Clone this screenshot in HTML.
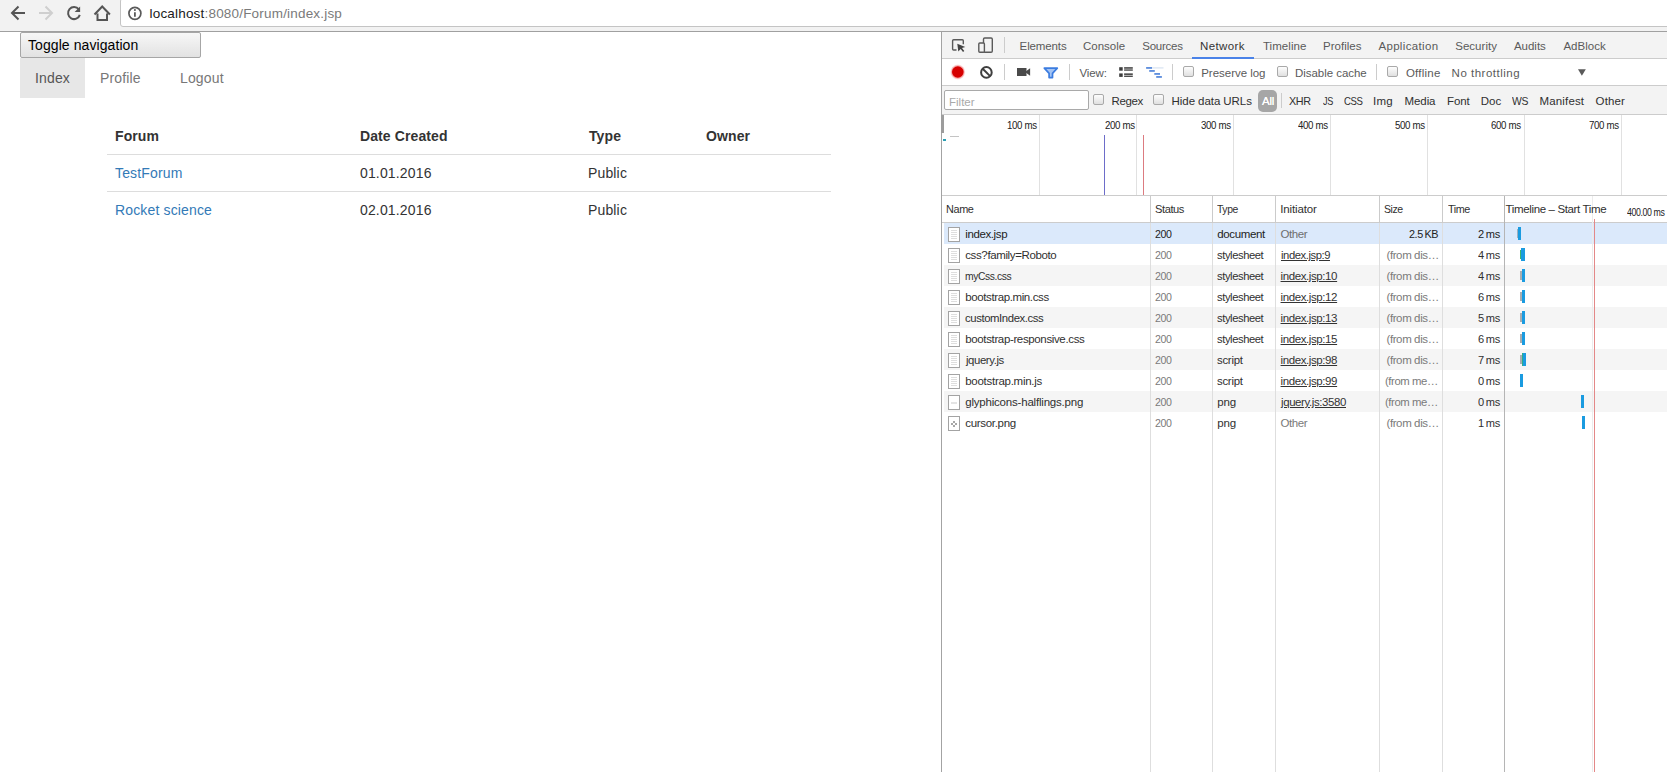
<!DOCTYPE html>
<html>
<head>
<meta charset="utf-8">
<title>Forum</title>
<style>
*{box-sizing:border-box;margin:0;padding:0}
html,body{width:1667px;height:772px;overflow:hidden;background:#fff}
body{position:relative;font-family:"Liberation Sans",sans-serif;color:#333}
.abs{position:absolute}
/* browser chrome */
#chrome{position:absolute;left:0;top:0;width:1667px;height:32px;background:#f2f2f2;border-bottom:1px solid #a0a0a0}
#urlbox{position:absolute;left:120px;top:-2px;width:1560px;height:29px;background:#fff;border:1px solid #c4c4c4;border-radius:3px}
#url{position:absolute;left:149.500px;top:5px;font-size:13.500px;line-height:17px;color:#7a7a7a;white-space:nowrap;letter-spacing:0.190px}
#url b{font-weight:normal;color:#1b1b1b}
/* page */
#togglebtn{position:absolute;left:20px;top:32px;width:181px;height:26px;border:1px solid #a6a6a6;border-radius:2px;background:linear-gradient(#f7f7f7,#e2e2e2);font-size:14px;line-height:24px;color:#000;padding-left:7px;white-space:nowrap;letter-spacing:0.08px}
.nav{position:absolute;top:58px;height:40px;font-size:14px;line-height:40px;color:#777;white-space:nowrap;letter-spacing:0.15px}
#nav1{left:20px;width:65px;background:#e7e7e7;color:#555;text-align:center}
#nav2{left:100px}
#nav3{left:180px}
.th{position:absolute;top:128px;font-size:14px;line-height:17px;font-weight:bold;color:#333;white-space:nowrap;letter-spacing:0.1px}
.td{position:absolute;font-size:14px;line-height:17px;color:#333;white-space:nowrap;letter-spacing:0.15px}
.td.l{color:#337ab7}
.hr{position:absolute;left:107px;width:724px;height:1px;background:#ddd}
/* devtools */
.t{position:absolute;white-space:nowrap;line-height:1;font-family:"Liberation Sans",sans-serif;transform-origin:0 50%}
.bx{position:absolute}
.vsep{position:absolute;width:1px;background:#ccc}
.cb{position:absolute;width:11px;height:11px;border:1px solid #a9a9a9;border-radius:2px;background:linear-gradient(#fdfdfd,#e0e0e0)}
.g{position:absolute;top:115px;width:1px;height:80px;background:#e1e1e1}
.col{position:absolute;top:196px;width:1px;height:576px;background:#dedede}
.row{position:absolute;left:944px;width:723px;height:21px}
.fi{position:absolute;left:948px;width:12px;height:15px;border:1px solid #a3a3a3;background:#fff}
.fi i{position:absolute;left:2px;width:6px;height:1px;background:#dedede}
.bar{position:absolute;height:13px;background:#1a9be0}
</style>
</head>
<body>
<div id="chrome">
  <div id="urlbox"></div>
  <svg class="abs" style="left:0;top:0" width="145" height="31" viewBox="0 0 145 31" fill="none">
    <g stroke="#555" stroke-width="2" stroke-linecap="butt" stroke-linejoin="miter">
      <path d="M25 13H12.5M18.5 6.5L12 13l6.500 6.500"/>
      <path d="M78.800 9.400A6 6 0 1 0 79.800 14.900" />
      <path d="M97.500 13.500V20h9.500v-6.500M94.500 14.500L102.200 6.500l7.700 8"/>
    </g>
    <path d="M80.100 6.400v5.500h-5.500z" fill="#555"/>
    <g stroke="#cfcfcf" stroke-width="2"><path d="M39 13H51.500M45.500 6.500L52 13l-6.500 6.500"/></g>
    <circle cx="134.900" cy="13.300" r="6" stroke="#5a5a5a" stroke-width="1.700"/>
    <path d="M134.900 12.300v4.500" stroke="#5a5a5a" stroke-width="1.800"/>
    <circle cx="134.900" cy="10" r="1.050" fill="#5a5a5a"/>
  </svg>
  <div id="url"><b>localhost</b>:8080/Forum/index.jsp</div>
</div>

<div id="togglebtn">Toggle navigation</div>
<div class="nav" id="nav1">Index</div>
<div class="nav" id="nav2">Profile</div>
<div class="nav" id="nav3">Logout</div>

<div class="th" style="left:115px">Forum</div>
<div class="th" style="left:360px">Date Created</div>
<div class="th" style="left:589px">Type</div>
<div class="th" style="left:706px">Owner</div>
<div class="hr" style="top:154px"></div>
<div class="td l" style="left:115px;top:165px">TestForum</div>
<div class="td" style="left:360px;top:165px">01.01.2016</div>
<div class="td" style="left:588px;top:165px">Public</div>
<div class="hr" style="top:191px"></div>
<div class="td l" style="left:115px;top:202px">Rocket science</div>
<div class="td" style="left:360px;top:202px">02.01.2016</div>
<div class="td" style="left:588px;top:202px">Public</div>

<!-- devtools frame -->
<div class="bx" style="left:941px;top:32px;width:1px;height:740px;background:#a3a3a3"></div>
<div class="bx" style="left:942px;top:32px;width:725px;height:27px;background:#f3f3f3;border-bottom:1px solid #ccc"></div>
<div class="bx" style="left:942px;top:59px;width:725px;height:27px;background:#fff;border-bottom:1px solid #ccc"></div>
<div class="bx" style="left:942px;top:86px;width:725px;height:29px;background:#f3f3f3;border-bottom:1px solid #ccc"></div>
<div class="bx" style="left:942px;top:195px;width:725px;height:1px;background:#ccc"></div>
<div class="bx" style="left:942px;top:222px;width:725px;height:1px;background:#ccc"></div>
<!-- network tab underline -->
<div class="bx" style="left:1192px;top:57px;width:62px;height:2px;background:#4a82e8"></div>
<!-- tab bar icons -->
<svg class="abs" style="left:942px;top:32px" width="70" height="27" viewBox="0 0 70 27" fill="none">
  <path d="M21.300 12.200V8.700a1 1 0 0 0 -1 -1h-8.700a1 1 0 0 0 -1 1v8.300a1 1 0 0 0 1 1H14.500" stroke="#5a5a5a" stroke-width="1.400"/>
  <path d="M15.300 11.700l8 3.200-3.300 1.200 2.300 3-1.300 1-2.300-3-2.400 2.300z" fill="#444"/>
  <rect x="41.500" y="6" width="8.800" height="14.200" rx="1.200" stroke="#5a5a5a" stroke-width="1.400"/>
  <rect x="36.800" y="11" width="5.600" height="9.200" rx="1" fill="#f3f3f3" stroke="#5a5a5a" stroke-width="1.400"/>
</svg>
<div class="vsep" style="left:1004px;top:37px;height:16px"></div>
<!-- toolbar icons -->
<svg class="abs" style="left:942px;top:59px" width="240" height="27" viewBox="0 0 240 27" fill="none">
  <circle cx="15.800" cy="13" r="7.400" fill="#fde3e3"/>
  <circle cx="15.800" cy="13" r="6.700" fill="#f7a8a8"/>
  <circle cx="15.800" cy="13" r="5.800" fill="#d60000"/>
  <circle cx="44.400" cy="13.400" r="5.300" stroke="#3f3f3f" stroke-width="2"/>
  <path d="M40.700 9.700l7.400 7.400" stroke="#3f3f3f" stroke-width="2"/>
  <path d="M75 9h9.500v8H75z" fill="#4a4a4a"/>
  <path d="M83 13l5.100-3.700v7.400z" fill="#4a4a4a"/>
  <path d="M102.300 9.200h13l-4.800 5.200v4.200l-3.400 0v-4.200z" fill="#a4c4f4" stroke="#3b7ce0" stroke-width="1.700" stroke-linejoin="round"/>
  <g fill="#3c3c3c"><rect x="177.200" y="8.200" width="3.500" height="3.500"/><rect x="177.200" y="14.400" width="3.500" height="3.500"/>
  <rect x="182.100" y="8.200" width="8.700" height="1.500"/><rect x="182.100" y="10.400" width="8.700" height="1.300"/>
  <rect x="182.100" y="14.400" width="8.700" height="1.500"/><rect x="182.100" y="16.600" width="8.700" height="1.300"/></g>
  <g fill="#3b76d6"><rect x="204.100" y="8.200" width="5.900" height="1.500"/><rect x="207.200" y="11.200" width="5.600" height="1.500"/><rect x="212.300" y="14.200" width="5.700" height="1.500"/><rect x="214.200" y="17.200" width="5.700" height="1.500"/></g>
  <rect x="210" y="8.200" width="11.500" height="1.400" fill="#dde6f3"/>
</svg>
<div class="vsep" style="left:1004px;top:64px;height:16px"></div>
<div class="vsep" style="left:1069px;top:64px;height:16px"></div>
<div class="vsep" style="left:1172px;top:64px;height:16px"></div>
<div class="vsep" style="left:1376px;top:64px;height:16px"></div>
<div class="cb" style="left:1183px;top:66px"></div>
<div class="cb" style="left:1277px;top:66px"></div>
<div class="cb" style="left:1387px;top:66px"></div>
<svg class="abs" style="left:1577px;top:68px" width="10" height="9" viewBox="0 0 10 9"><path d="M1 1.200h7.800L4.900 7.800z" fill="#5a5a5a"/></svg>
<!-- filter row -->
<div class="bx" style="left:944px;top:90px;width:145px;height:20px;background:#fff;border:1px solid #a9a9a9;border-radius:2px"></div>
<div class="cb" style="left:1093px;top:94px"></div>
<div class="cb" style="left:1153px;top:94px"></div>
<div class="bx" style="left:1258px;top:90px;width:19px;height:22px;background:#a6a6a6;border-radius:5px"></div>
<div class="vsep" style="left:1281px;top:93px;height:15px"></div>
<!-- overview -->
<div class="g" style="left:1039px"></div><div class="g" style="left:1136px"></div><div class="g" style="left:1233px"></div>
<div class="g" style="left:1330px"></div><div class="g" style="left:1427px"></div><div class="g" style="left:1524px"></div><div class="g" style="left:1621px"></div>
<div class="bx" style="left:941px;top:115px;width:3px;height:18px;background:#9c9c9c"></div>
<div class="bx" style="left:943px;top:139px;width:3px;height:2px;background:#2a9fb4"></div>
<div class="bx" style="left:950px;top:136px;width:9px;height:1px;background:#c4c4c4"></div>
<div class="bx" style="left:1104px;top:135px;width:1px;height:60px;background:#6d6dc9"></div>
<div class="bx" style="left:1143px;top:135px;width:1px;height:60px;background:#dc7b80"></div>
<div class="row" style="top:223px;background:#dbe9fb"></div>
<div class="row" style="top:265px;background:#f5f5f5"></div>
<div class="row" style="top:307px;background:#f5f5f5"></div>
<div class="row" style="top:349px;background:#f5f5f5"></div>
<div class="row" style="top:391px;background:#f5f5f5"></div>
<div class="col" style="left:1150px"></div>
<div class="col" style="left:1150px;height:27px;background:#cbcbcb"></div>
<div class="col" style="left:1212px"></div>
<div class="col" style="left:1212px;height:27px;background:#cbcbcb"></div>
<div class="col" style="left:1275px"></div>
<div class="col" style="left:1275px;height:27px;background:#cbcbcb"></div>
<div class="col" style="left:1379px"></div>
<div class="col" style="left:1379px;height:27px;background:#cbcbcb"></div>
<div class="col" style="left:1442px"></div>
<div class="col" style="left:1442px;height:27px;background:#cbcbcb"></div>
<div class="col" style="left:1504px;background:#b5b5b5"></div>
<div class="col" style="left:1592px;background:#ececec"></div>
<div class="bx" style="left:1594px;top:219px;width:1px;height:553px;background:#e38888"></div>
<div class="fi" style="top:227px"><i style="top:2px"></i><i style="top:4px"></i><i style="top:6px"></i><i style="top:8px"></i><i style="top:10px"></i></div>
<div class="fi" style="top:248px"><i style="top:2px"></i><i style="top:4px"></i><i style="top:6px"></i><i style="top:8px"></i><i style="top:10px"></i></div>
<div class="fi" style="top:269px"><i style="top:2px"></i><i style="top:4px"></i><i style="top:6px"></i><i style="top:8px"></i><i style="top:10px"></i></div>
<div class="fi" style="top:290px"><i style="top:2px"></i><i style="top:4px"></i><i style="top:6px"></i><i style="top:8px"></i><i style="top:10px"></i></div>
<div class="fi" style="top:311px"><i style="top:2px"></i><i style="top:4px"></i><i style="top:6px"></i><i style="top:8px"></i><i style="top:10px"></i></div>
<div class="fi" style="top:332px"><i style="top:2px"></i><i style="top:4px"></i><i style="top:6px"></i><i style="top:8px"></i><i style="top:10px"></i></div>
<div class="fi" style="top:353px"><i style="top:2px"></i><i style="top:4px"></i><i style="top:6px"></i><i style="top:8px"></i><i style="top:10px"></i></div>
<div class="fi" style="top:374px"><i style="top:2px"></i><i style="top:4px"></i><i style="top:6px"></i><i style="top:8px"></i><i style="top:10px"></i></div>
<div class="fi" style="top:395px"><i style="top:6px;left:2px;width:6px;height:2px;background:#e4e4e4"></i></div>
<div class="fi" style="top:416px"><i style="top:4px;left:4px;width:2px;height:2px;background:#8a8a8a;border-radius:1px"></i><i style="top:8px;left:4px;width:2px;height:2px;background:#8a8a8a;border-radius:1px"></i><i style="top:6px;left:2px;width:2px;height:2px;background:#8a8a8a;border-radius:1px"></i><i style="top:6px;left:6px;width:2px;height:2px;background:#8a8a8a;border-radius:1px"></i></div>
<div class="bar" style="left:1518px;top:227px;width:3px"></div>
<div class="bar" style="left:1517px;top:229px;width:1px;height:9px;background:#9fb0bd"></div>
<div class="bar" style="left:1521px;top:248px;width:4px"></div>
<div class="bar" style="left:1520px;top:250px;width:1px;height:9px;background:#3fb56f"></div>
<div class="bar" style="left:1522px;top:269px;width:3px"></div>
<div class="bar" style="left:1520px;top:271px;width:2px;height:9px;background:#a9adb0"></div>
<div class="bar" style="left:1522px;top:290px;width:3px"></div>
<div class="bar" style="left:1520px;top:292px;width:2px;height:9px;background:#a9adb0"></div>
<div class="bar" style="left:1522px;top:311px;width:3px"></div>
<div class="bar" style="left:1520px;top:313px;width:2px;height:9px;background:#a9adb0"></div>
<div class="bar" style="left:1522px;top:332px;width:3px"></div>
<div class="bar" style="left:1520px;top:334px;width:2px;height:9px;background:#a9adb0"></div>
<div class="bar" style="left:1523px;top:353px;width:3px"></div>
<div class="bar" style="left:1520px;top:355px;width:2px;height:9px;background:#a9adb0"></div>
<div class="bar" style="left:1522px;top:353px;width:1px;background:#2fae86"></div>
<div class="bar" style="left:1520px;top:374px;width:3px"></div>
<div class="bar" style="left:1581px;top:395px;width:3px"></div>
<div class="bar" style="left:1582px;top:416px;width:3px"></div>
<span class="t" style="left:1019.61px;top:41.3px;font-size:11.5px;color:#5a5a5a;letter-spacing:-0.129px;">Elements</span>
<span class="t" style="left:1083.05px;top:41.3px;font-size:11.5px;color:#5a5a5a;letter-spacing:-0.015px;">Console</span>
<span class="t" style="left:1142.22px;top:41.3px;font-size:11.5px;color:#5a5a5a;letter-spacing:-0.255px;">Sources</span>
<span class="t" style="left:1200.05px;top:41.3px;font-size:11.5px;color:#333;letter-spacing:0.375px;">Network</span>
<span class="t" style="left:1262.95px;top:41.3px;font-size:11.5px;color:#5a5a5a;letter-spacing:0.051px;">Timeline</span>
<span class="t" style="left:1323.05px;top:41.3px;font-size:11.5px;color:#5a5a5a;letter-spacing:0.000px;">Profiles</span>
<span class="t" style="left:1378.39px;top:41.3px;font-size:11.5px;color:#5a5a5a;letter-spacing:0.342px;">Application</span>
<span class="t" style="left:1455.22px;top:41.3px;font-size:11.5px;color:#5a5a5a;letter-spacing:0.026px;">Security</span>
<span class="t" style="left:1513.95px;top:41.3px;font-size:11.5px;color:#5a5a5a;letter-spacing:-0.018px;">Audits</span>
<span class="t" style="left:1563.39px;top:41.3px;font-size:11.5px;color:#5a5a5a;letter-spacing:0.045px;">AdBlock</span>
<span class="t" style="left:1079.39px;top:68.3px;font-size:11.5px;color:#5a5a5a;letter-spacing:-0.067px;">View:</span>
<span class="t" style="left:1201.22px;top:68.3px;font-size:11.5px;color:#5a5a5a;letter-spacing:-0.025px;">Preserve log</span>
<span class="t" style="left:1295.05px;top:68.3px;font-size:11.5px;color:#5a5a5a;letter-spacing:-0.045px;">Disable cache</span>
<span class="t" style="left:1405.95px;top:68.3px;font-size:11.5px;color:#5a5a5a;letter-spacing:0.240px;">Offline</span>
<span class="t" style="left:1451.61px;top:68.3px;font-size:11.5px;color:#5a5a5a;letter-spacing:0.495px;">No throttling</span>
<span class="t" style="left:949.00px;top:96.8px;font-size:11.5px;color:#a9a9a9;letter-spacing:0.000px;">Filter</span>
<span class="t" style="left:1111.61px;top:96.3px;font-size:11.5px;color:#303030;letter-spacing:-0.428px;">Regex</span>
<span class="t" style="left:1171.61px;top:96.3px;font-size:11.5px;color:#303030;letter-spacing:-0.069px;">Hide data URLs</span>
<span class="t" style="left:1261.95px;top:96.3px;font-size:11.5px;color:#fff;letter-spacing:-0.225px;text-shadow:0 0 0.6px #fff">All</span>
<span class="t" style="left:1289.44px;top:96.3px;font-size:11.5px;color:#303030;letter-spacing:-0.450px;transform:scaleX(0.938);">XHR</span>
<span class="t" style="left:1322.56px;top:96.3px;font-size:11.5px;color:#303030;letter-spacing:-0.450px;transform:scaleX(0.792);">JS</span>
<span class="t" style="left:1343.56px;top:96.3px;font-size:11.5px;color:#303030;letter-spacing:-0.450px;transform:scaleX(0.835);">CSS</span>
<span class="t" style="left:1373.05px;top:96.3px;font-size:11.5px;color:#303030;letter-spacing:0.240px;">Img</span>
<span class="t" style="left:1404.61px;top:96.3px;font-size:11.5px;color:#303030;letter-spacing:-0.113px;">Media</span>
<span class="t" style="left:1447.05px;top:96.3px;font-size:11.5px;color:#303030;letter-spacing:-0.150px;">Font</span>
<span class="t" style="left:1480.66px;top:96.3px;font-size:11.5px;color:#303030;letter-spacing:0.045px;">Doc</span>
<span class="t" style="left:1512.00px;top:96.3px;font-size:11.5px;color:#303030;letter-spacing:-0.450px;transform:scaleX(0.902);">WS</span>
<span class="t" style="left:1539.61px;top:96.3px;font-size:11.5px;color:#303030;letter-spacing:0.129px;">Manifest</span>
<span class="t" style="left:1595.56px;top:96.3px;font-size:11.5px;color:#303030;letter-spacing:0.135px;">Other</span>
<span class="t" style="left:1007.39px;top:120.5px;font-size:10px;color:#222;letter-spacing:-0.360px;transform:scaleX(0.971);">100 ms</span>
<span class="t" style="left:1104.56px;top:120.5px;font-size:10px;color:#222;letter-spacing:-0.360px;transform:scaleX(0.972);">200 ms</span>
<span class="t" style="left:1200.83px;top:120.5px;font-size:10px;color:#222;letter-spacing:-0.360px;transform:scaleX(0.972);">300 ms</span>
<span class="t" style="left:1298.00px;top:120.5px;font-size:10px;color:#222;letter-spacing:-0.360px;transform:scaleX(0.972);">400 ms</span>
<span class="t" style="left:1395.17px;top:120.5px;font-size:10px;color:#222;letter-spacing:-0.360px;transform:scaleX(0.971);">500 ms</span>
<span class="t" style="left:1491.44px;top:120.5px;font-size:10px;color:#222;letter-spacing:-0.360px;transform:scaleX(0.972);">600 ms</span>
<span class="t" style="left:1588.61px;top:120.5px;font-size:10px;color:#222;letter-spacing:-0.360px;transform:scaleX(0.971);">700 ms</span>
<span class="t" style="left:946.44px;top:204.3px;font-size:11.5px;color:#303030;letter-spacing:-0.390px;transform:scaleX(0.945);">Name</span>
<span class="t" style="left:1155.00px;top:204.3px;font-size:11.5px;color:#303030;letter-spacing:-0.450px;transform:scaleX(0.970);">Status</span>
<span class="t" style="left:1217.05px;top:204.3px;font-size:11.5px;color:#303030;letter-spacing:-0.450px;transform:scaleX(0.903);">Type</span>
<span class="t" style="left:1280.22px;top:204.3px;font-size:11.5px;color:#303030;letter-spacing:-0.146px;">Initiator</span>
<span class="t" style="left:1384.05px;top:204.3px;font-size:11.5px;color:#303030;letter-spacing:-0.450px;transform:scaleX(0.914);">Size</span>
<span class="t" style="left:1447.78px;top:204.3px;font-size:11.5px;color:#303030;letter-spacing:-0.450px;transform:scaleX(0.940);">Time</span>
<span class="t" style="left:1505.56px;top:204.3px;font-size:11.5px;color:#303030;letter-spacing:-0.360px;">Timeline – Start Time</span>
<span class="t" style="left:1626.78px;top:207.5px;font-size:10px;color:#222;letter-spacing:-0.450px;transform:scaleX(0.879);">400.00 ms</span>
<span class="t" style="left:965.22px;top:229.3px;font-size:11.5px;color:#222;letter-spacing:-0.382px;">index.jsp</span>
<span class="t" style="left:1155.00px;top:229.3px;font-size:11.5px;color:#222;letter-spacing:-0.450px;transform:scaleX(0.923);">200</span>
<span class="t" style="left:1217.22px;top:229.3px;font-size:11.5px;color:#222;letter-spacing:-0.347px;">document</span>
<span class="t" style="left:1280.56px;top:229.3px;font-size:11.5px;color:#6e6e6e;letter-spacing:-0.450px;">Other</span>
<span class="t" style="left:1409.00px;top:229.3px;font-size:11.5px;color:#222;letter-spacing:-0.450px;transform:scaleX(0.942);word-spacing:-1px">2.5 KB</span>
<span class="t" style="left:1478.00px;top:229.3px;font-size:11.5px;color:#222;letter-spacing:-0.300px;transform:scaleX(0.963);word-spacing:-1px">2 ms</span>
<span class="t" style="left:965.22px;top:250.3px;font-size:11.5px;color:#303030;letter-spacing:-0.371px;">css?family=Roboto</span>
<span class="t" style="left:1155.00px;top:250.3px;font-size:11.5px;color:#7a7a7a;letter-spacing:-0.450px;transform:scaleX(0.923);">200</span>
<span class="t" style="left:1217.22px;top:250.3px;font-size:11.5px;color:#303030;letter-spacing:-0.430px;transform:scaleX(0.975);">stylesheet</span>
<span class="t" style="left:1280.56px;top:250.3px;font-size:11.5px;color:#333;letter-spacing:-0.450px;transform:scaleX(0.979);text-decoration:underline">index.jsp:9</span>
<span class="t" style="left:1386.44px;top:250.3px;font-size:11.5px;color:#7a7a7a;letter-spacing:-0.390px;">(from dis…</span>
<span class="t" style="left:1478.00px;top:250.3px;font-size:11.5px;color:#303030;letter-spacing:-0.300px;transform:scaleX(0.963);word-spacing:-1px">4 ms</span>
<span class="t" style="left:965.22px;top:271.3px;font-size:11.5px;color:#303030;letter-spacing:-0.450px;transform:scaleX(0.896);">myCss.css</span>
<span class="t" style="left:1155.00px;top:271.3px;font-size:11.5px;color:#7a7a7a;letter-spacing:-0.450px;transform:scaleX(0.923);">200</span>
<span class="t" style="left:1217.22px;top:271.3px;font-size:11.5px;color:#303030;letter-spacing:-0.430px;transform:scaleX(0.975);">stylesheet</span>
<span class="t" style="left:1280.56px;top:271.3px;font-size:11.5px;color:#333;letter-spacing:-0.401px;text-decoration:underline">index.jsp:10</span>
<span class="t" style="left:1386.44px;top:271.3px;font-size:11.5px;color:#7a7a7a;letter-spacing:-0.390px;">(from dis…</span>
<span class="t" style="left:1478.00px;top:271.3px;font-size:11.5px;color:#303030;letter-spacing:-0.300px;transform:scaleX(0.963);word-spacing:-1px">4 ms</span>
<span class="t" style="left:965.22px;top:292.3px;font-size:11.5px;color:#303030;letter-spacing:-0.388px;">bootstrap.min.css</span>
<span class="t" style="left:1155.00px;top:292.3px;font-size:11.5px;color:#7a7a7a;letter-spacing:-0.450px;transform:scaleX(0.923);">200</span>
<span class="t" style="left:1217.22px;top:292.3px;font-size:11.5px;color:#303030;letter-spacing:-0.430px;transform:scaleX(0.975);">stylesheet</span>
<span class="t" style="left:1280.56px;top:292.3px;font-size:11.5px;color:#333;letter-spacing:-0.401px;text-decoration:underline">index.jsp:12</span>
<span class="t" style="left:1386.44px;top:292.3px;font-size:11.5px;color:#7a7a7a;letter-spacing:-0.390px;">(from dis…</span>
<span class="t" style="left:1478.00px;top:292.3px;font-size:11.5px;color:#303030;letter-spacing:-0.300px;transform:scaleX(0.963);word-spacing:-1px">6 ms</span>
<span class="t" style="left:965.22px;top:313.3px;font-size:11.5px;color:#303030;letter-spacing:-0.411px;transform:scaleX(0.986);">customIndex.css</span>
<span class="t" style="left:1155.00px;top:313.3px;font-size:11.5px;color:#7a7a7a;letter-spacing:-0.450px;transform:scaleX(0.923);">200</span>
<span class="t" style="left:1217.22px;top:313.3px;font-size:11.5px;color:#303030;letter-spacing:-0.430px;transform:scaleX(0.975);">stylesheet</span>
<span class="t" style="left:1280.56px;top:313.3px;font-size:11.5px;color:#333;letter-spacing:-0.401px;text-decoration:underline">index.jsp:13</span>
<span class="t" style="left:1386.44px;top:313.3px;font-size:11.5px;color:#7a7a7a;letter-spacing:-0.390px;">(from dis…</span>
<span class="t" style="left:1478.00px;top:313.3px;font-size:11.5px;color:#303030;letter-spacing:-0.300px;transform:scaleX(0.963);word-spacing:-1px">5 ms</span>
<span class="t" style="left:965.22px;top:334.3px;font-size:11.5px;color:#303030;letter-spacing:-0.360px;">bootstrap-responsive.css</span>
<span class="t" style="left:1155.00px;top:334.3px;font-size:11.5px;color:#7a7a7a;letter-spacing:-0.450px;transform:scaleX(0.923);">200</span>
<span class="t" style="left:1217.22px;top:334.3px;font-size:11.5px;color:#303030;letter-spacing:-0.430px;transform:scaleX(0.975);">stylesheet</span>
<span class="t" style="left:1280.56px;top:334.3px;font-size:11.5px;color:#333;letter-spacing:-0.401px;text-decoration:underline">index.jsp:15</span>
<span class="t" style="left:1386.44px;top:334.3px;font-size:11.5px;color:#7a7a7a;letter-spacing:-0.390px;">(from dis…</span>
<span class="t" style="left:1478.00px;top:334.3px;font-size:11.5px;color:#303030;letter-spacing:-0.300px;transform:scaleX(0.963);word-spacing:-1px">6 ms</span>
<span class="t" style="left:966.12px;top:355.3px;font-size:11.5px;color:#303030;letter-spacing:-0.416px;transform:scaleX(0.989);">jquery.js</span>
<span class="t" style="left:1155.00px;top:355.3px;font-size:11.5px;color:#7a7a7a;letter-spacing:-0.450px;transform:scaleX(0.923);">200</span>
<span class="t" style="left:1217.22px;top:355.3px;font-size:11.5px;color:#303030;letter-spacing:-0.270px;transform:scaleX(0.992);">script</span>
<span class="t" style="left:1280.56px;top:355.3px;font-size:11.5px;color:#333;letter-spacing:-0.401px;text-decoration:underline">index.jsp:98</span>
<span class="t" style="left:1386.44px;top:355.3px;font-size:11.5px;color:#7a7a7a;letter-spacing:-0.390px;">(from dis…</span>
<span class="t" style="left:1478.00px;top:355.3px;font-size:11.5px;color:#303030;letter-spacing:-0.300px;transform:scaleX(0.963);word-spacing:-1px">7 ms</span>
<span class="t" style="left:965.22px;top:376.3px;font-size:11.5px;color:#303030;letter-spacing:-0.276px;">bootstrap.min.js</span>
<span class="t" style="left:1155.00px;top:376.3px;font-size:11.5px;color:#7a7a7a;letter-spacing:-0.450px;transform:scaleX(0.923);">200</span>
<span class="t" style="left:1217.22px;top:376.3px;font-size:11.5px;color:#303030;letter-spacing:-0.270px;transform:scaleX(0.992);">script</span>
<span class="t" style="left:1280.56px;top:376.3px;font-size:11.5px;color:#333;letter-spacing:-0.401px;text-decoration:underline">index.jsp:99</span>
<span class="t" style="left:1385.22px;top:376.3px;font-size:11.5px;color:#7a7a7a;letter-spacing:-0.428px;transform:scaleX(0.984);">(from me…</span>
<span class="t" style="left:1478.00px;top:376.3px;font-size:11.5px;color:#303030;letter-spacing:-0.300px;transform:scaleX(0.963);word-spacing:-1px">0 ms</span>
<span class="t" style="left:965.22px;top:397.3px;font-size:11.5px;color:#303030;letter-spacing:-0.200px;">glyphicons-halflings.png</span>
<span class="t" style="left:1155.00px;top:397.3px;font-size:11.5px;color:#7a7a7a;letter-spacing:-0.450px;transform:scaleX(0.923);">200</span>
<span class="t" style="left:1217.22px;top:397.3px;font-size:11.5px;color:#303030;letter-spacing:-0.090px;">png</span>
<span class="t" style="left:1281.46px;top:397.3px;font-size:11.5px;color:#333;letter-spacing:-0.388px;transform:scaleX(0.995);text-decoration:underline">jquery.js:3580</span>
<span class="t" style="left:1385.22px;top:397.3px;font-size:11.5px;color:#7a7a7a;letter-spacing:-0.428px;transform:scaleX(0.984);">(from me…</span>
<span class="t" style="left:1478.00px;top:397.3px;font-size:11.5px;color:#303030;letter-spacing:-0.300px;transform:scaleX(0.963);word-spacing:-1px">0 ms</span>
<span class="t" style="left:965.22px;top:418.3px;font-size:11.5px;color:#303030;letter-spacing:-0.310px;">cursor.png</span>
<span class="t" style="left:1155.00px;top:418.3px;font-size:11.5px;color:#7a7a7a;letter-spacing:-0.450px;transform:scaleX(0.923);">200</span>
<span class="t" style="left:1217.22px;top:418.3px;font-size:11.5px;color:#303030;letter-spacing:-0.090px;">png</span>
<span class="t" style="left:1280.56px;top:418.3px;font-size:11.5px;color:#7a7a7a;letter-spacing:-0.450px;">Other</span>
<span class="t" style="left:1386.44px;top:418.3px;font-size:11.5px;color:#7a7a7a;letter-spacing:-0.390px;">(from dis…</span>
<span class="t" style="left:1478.00px;top:418.3px;font-size:11.5px;color:#303030;letter-spacing:-0.300px;transform:scaleX(0.963);word-spacing:-1px">1 ms</span>
</body>
</html>
